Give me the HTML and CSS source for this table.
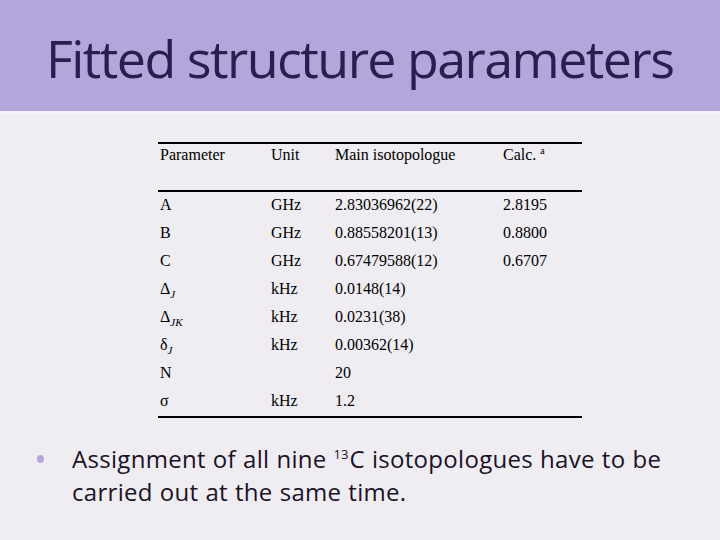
FILE: index.html
```html
<!DOCTYPE html>
<html>
<head>
<meta charset="utf-8">
<link rel="stylesheet" href="styles.css">
</head>
<body>
<div class="slide">
  <header class="band">
    <h1 class="title">Fitted structure parameters</h1>
  </header>
  <div class="content">
    <table class="params">
      <thead>
        <tr><th>Parameter</th><th>Unit</th><th>Main isotopologue</th><th>Calc. <sup>a</sup></th></tr>
      </thead>
      <tbody>
        <tr><td>A</td><td>GHz</td><td>2.83036962(22)</td><td>2.8195</td></tr>
        <tr><td>B</td><td>GHz</td><td>0.88558201(13)</td><td>0.8800</td></tr>
        <tr><td>C</td><td>GHz</td><td>0.67479588(12)</td><td>0.6707</td></tr>
        <tr><td>&Delta;<sub><i>J</i></sub></td><td>kHz</td><td>0.0148(14)</td><td></td></tr>
        <tr><td>&Delta;<sub><i>JK</i></sub></td><td>kHz</td><td>0.0231(38)</td><td></td></tr>
        <tr><td>&delta;<sub><i>J</i></sub></td><td>kHz</td><td>0.00362(14)</td><td></td></tr>
        <tr><td>N</td><td></td><td>20</td><td></td></tr>
        <tr><td>&sigma;</td><td>kHz</td><td>1.2</td><td></td></tr>
      </tbody>
    </table>
    <ul class="bullets">
      <li>Assignment of all nine <span class="iso">13</span>C isotopologues have to be carried out at the same time.</li>
    </ul>
  </div>
</div>
</body>
</html>
```
FILE: styles.css
```css
html, body {
  margin: 0;
  padding: 0;
}
body {
  width: 720px;
  height: 540px;
  overflow: hidden;
  background: #efedf2;
}
.slide {
  width: 720px;
  height: 540px;
  display: flex;
  flex-direction: column;
}
.band {
  height: 114px;
  background: #b3a6db;
  border-bottom: 3px solid #f6f4f8;
  box-sizing: border-box;
  padding-left: 46px;
  padding-top: 27px;
}
.title {
  margin: 0;
  font-family: "Open Sans", sans-serif;
  font-weight: 400;
  font-size: 52px;
  letter-spacing: -1.55px;
  line-height: 62px;
  color: #2d1c4e;
}
.content {
  display: flex;
  flex-direction: column;
}
.params {
  margin-top: 28px;
  margin-left: 158px;
  width: 424px;
  border-collapse: collapse;
  font-family: "Liberation Serif", serif;
  font-size: 16px;
  color: #000;
}
.params th {
  font-weight: 400;
  text-align: left;
  vertical-align: top;
  height: 46px;
  padding: 0 0 0 2px;
  line-height: 22px;
}
.params thead tr {
  border-top: 2px solid #000;
  border-bottom: 2px solid #000;
}
.params tbody tr:last-child {
  border-bottom: 2px solid #000;
}
.params td {
  padding: 0 0 2px 2px;
  height: 26px;
  line-height: 26px;
}
.params th:nth-child(1) { width: 109px; }
.params th:nth-child(2) { width: 62px; }
.params th:nth-child(3) { width: 166px; }
.params sup {
  font-size: 10px;
  vertical-align: 6px;
  line-height: 0;
}
.params sub {
  font-size: 11px;
  vertical-align: -4px;
  line-height: 0;
}
.bullets {
  margin: 24px 0 0 0;
  padding: 0 0 0 72px;
  list-style: none;
  font-family: "Open Sans", sans-serif;
  font-size: 24px;
  letter-spacing: 0.3px;
  word-spacing: 0.5px;
  line-height: 33px;
  color: #1a1226;
}
.bullets li {
  position: relative;
}
.bullets li::before {
  content: "";
  position: absolute;
  left: -35px;
  top: 13px;
  width: 7px;
  height: 8px;
  border-radius: 50%;
  background: #b3a6db;
}
.iso {
  font-size: 13px;
  line-height: 1;
  letter-spacing: 0;
  position: relative;
  top: -9px;
  margin-right: 1px;
}
```
